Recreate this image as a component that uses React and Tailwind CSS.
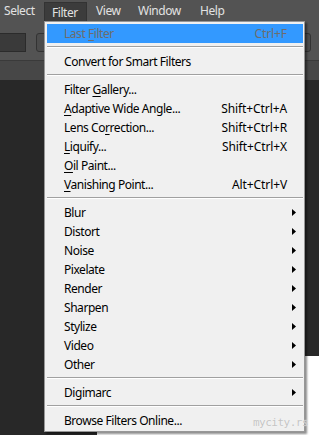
import React from 'react';

const menuItems = [
  { label: 'Last Filter', u: 5, shortcut: 'Ctrl+F', disabled: true, active: true },
  { sep: true },
  { label: 'Convert for Smart Filters' },
  { sep: true },
  { label: 'Filter Gallery...', u: 7 },
  { label: 'Adaptive Wide Angle...', u: 0, shortcut: 'Shift+Ctrl+A' },
  { label: 'Lens Correction...', u: 7, shortcut: 'Shift+Ctrl+R' },
  { label: 'Liquify...', u: 0, shortcut: 'Shift+Ctrl+X' },
  { label: 'Oil Paint...', u: 0 },
  { label: 'Vanishing Point...', u: 0, shortcut: 'Alt+Ctrl+V' },
  { sep: true },
  { label: 'Blur', sub: true },
  { label: 'Distort', sub: true },
  { label: 'Noise', sub: true },
  { label: 'Pixelate', sub: true },
  { label: 'Render', sub: true },
  { label: 'Sharpen', sub: true },
  { label: 'Stylize', sub: true },
  { label: 'Video', sub: true },
  { label: 'Other', sub: true },
  { sep: true },
  { label: 'Digimarc', sub: true },
  { sep: true },
  { label: 'Browse Filters Online...' },
];

const Label = ({ text, u }) => {
  if (u === undefined) return <span>{text}</span>;
  return (
    <span>
      {text.slice(0, u)}
      <span className="underline underline-offset-2">{text[u]}</span>
      {text.slice(u + 1)}
    </span>
  );
};

const Arrow = () => (
  <svg width="4" height="7" viewBox="0 0 4 7" className="ml-[5px]">
    <polygon points="0,0 4,3.5 0,7" fill="#000" />
  </svg>
);

const MenuRow = ({ item }) => (
  <div
    className={`h-[19px] flex items-center pl-[17px] ${
      item.active ? 'bg-[#3399ff]' : ''
    } ${item.disabled ? 'text-[#6d6d6d]' : 'text-black'}`}
  >
    <div className="flex-1 leading-none whitespace-nowrap">
      <Label text={item.label} u={item.u} />
    </div>
    {item.shortcut && (
      <div className="leading-none whitespace-nowrap tracking-[-0.1px]">{item.shortcut}</div>
    )}
    <div className="w-[16px] flex items-center">{item.sub && <Arrow />}</div>
  </div>
);

const Separator = () => (
  <div className="h-[9px] pt-[3px]">
    <div className="h-px bg-[#a0a0a0]" />
    <div className="h-px bg-white" />
  </div>
);

const App = () => {
  return (
    <div className="relative w-[319px] h-[435px] overflow-hidden bg-[#282828] font-['Noto_Sans',sans-serif] text-[12px] tracking-[-0.45px]">
      {/* menu bar */}
      <div className="h-[22px] bg-[#535353] flex text-[#e2e2e2] leading-none">
        <div className="w-[44px] pl-[4px] flex items-center">Select</div>
        <div className="w-[43px] mt-[2px] h-[20px] pl-[7px] flex items-center bg-[#3c3c3c] border border-[#333] border-b-0">
          Filter
        </div>
        <div className="w-[42px] pl-[9px] flex items-center">View</div>
        <div className="w-[62px] pl-[9px] flex items-center">Window</div>
        <div className="pl-[9px] flex items-center">Help</div>
      </div>

      {/* options bar */}
      <div className="h-[38px] bg-[#535353] flex pt-[11px]">
        <div className="w-[26px] h-[19px] bg-[#3a3a3a] border border-[#2b2b2b] border-l-0" />
        <div className="ml-[10px] w-[275px] h-[19px] rounded-[3px] bg-[#4c4c4c] border border-[#333]" />
      </div>

      {/* panel tabs */}
      <div className="h-[20px] bg-[#474747] border-t border-[#3a3a3a]" />

      {/* workspace */}
      <div className="h-[276px] bg-[#282828]" />
      <div className="flex h-[79px]">
        <div className="w-[97px] bg-[#282828]" />
        <div className="flex-1 bg-white" />
      </div>

      {/* filter dropdown */}
      <div className="absolute left-[44px] top-[21px] w-[261px] h-[411px] bg-[#f0f0f0] border border-[#979797] pt-[2px] pb-[1px] pl-[2px] pr-[1px] shadow-[2px_2px_2px_rgba(0,0,0,0.45)]">
        {menuItems.map((item, i) =>
          item.sep ? <Separator key={i} /> : <MenuRow key={i} item={item} />
        )}
      </div>

      {/* watermark */}
      <div className="absolute left-[253px] top-[415px] text-[11px] font-['DejaVu_Sans_Mono',monospace] text-[#c4c4c4] tracking-[-0.5px] [text-shadow:0_0_1px_#fff]">
        mycity.rs
      </div>
    </div>
  );
};

export default App;
